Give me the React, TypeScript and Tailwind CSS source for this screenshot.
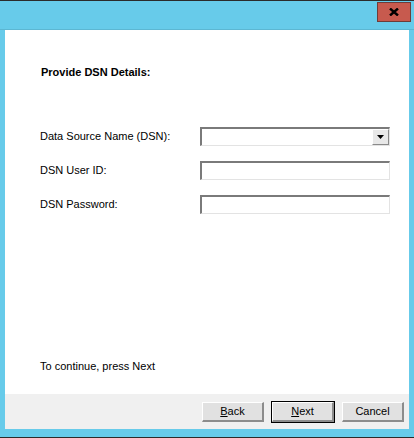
import React from "react";

const font = { fontFamily: '"Liberation Sans", Arial, sans-serif' };

function Field({ combo }: { combo?: boolean }) {
  return (
    <div className="relative h-[19px] w-[190px] bg-white border-t-2 border-l-2 border-t-[#7a7a7a] border-l-[#7a7a7a] border-b border-r border-b-[#e3e3e3] border-r-[#e3e3e3]">
      {combo && (
        <div className="absolute right-0 top-0 bottom-0 w-[17px] bg-[#e8e8e8] border-t border-l border-t-white border-l-white border-b border-r border-b-[#8a8a8a] border-r-[#8a8a8a] flex items-center justify-center">
          <svg width="7" height="4" viewBox="0 0 7 4">
            <path d="M0 0 H7 L3.5 4 Z" fill="#000" />
          </svg>
        </div>
      )}
    </div>
  );
}

function Btn({ label, u, def }: { label: string; u?: boolean; def?: boolean }) {
  return (
    <div
      className={
        "h-[22px] w-[64px] flex " +
        (def ? "border border-black" : "border border-transparent")
      }
    >
      <div className="flex-1 flex items-center justify-center bg-[#e1e1e1] border-t border-l border-t-white border-l-white border-b-2 border-r-2 border-b-[#8c8c8c] border-r-[#8c8c8c] text-[11px] text-black">
        {u ? (
          <span>
            <span className="underline">{label[0]}</span>
            {label.slice(1)}
          </span>
        ) : (
          label
        )}
      </div>
    </div>
  );
}

export default function App() {
  return (
    <div
      className="w-[414px] h-[438px] bg-[#67cbea] border-t border-t-[#2b2b2b] border-b border-b-[#2b2b2b] flex flex-col relative"
      style={font}
    >
      <div className="h-[29px] border-b border-b-[#5cb7d3]" />
      <div className="absolute left-[377px] top-[1px] w-[34px] h-[20px] bg-[#c75a4e] border border-[#6e3c39] flex items-center justify-center">
        <svg width="10" height="8" viewBox="0 0 10 8">
          <path d="M1 0.5 L9 7.5 M9 0.5 L1 7.5" stroke="#000" strokeWidth="2.4" />
        </svg>
      </div>
      <div className="mx-[5px] flex flex-col h-[399px]">
        <div className="bg-white flex-1 flex flex-col text-[11px] text-black">
          <div className="pl-[36px] pt-[35px] font-bold leading-[14px]">Provide DSN Details:</div>
          <div className="pl-[35px] pt-[48px] grid grid-cols-[160px_190px] gap-y-[15px] items-center">
            <div>Data Source Name (DSN):</div>
            <Field combo />
            <div>DSN User ID:</div>
            <Field />
            <div>DSN Password:</div>
            <Field />
          </div>
          <div className="pl-[35px] mt-auto mb-[21px] leading-[14px]">To continue, press Next</div>
        </div>
        <div className="h-[35px] bg-[#f0f0f0] flex items-center justify-end gap-[6px] pr-[4px]">
          <Btn label="Back" u />
          <Btn label="Next" u def />
          <Btn label="Cancel" />
        </div>
      </div>
    </div>
  );
}
